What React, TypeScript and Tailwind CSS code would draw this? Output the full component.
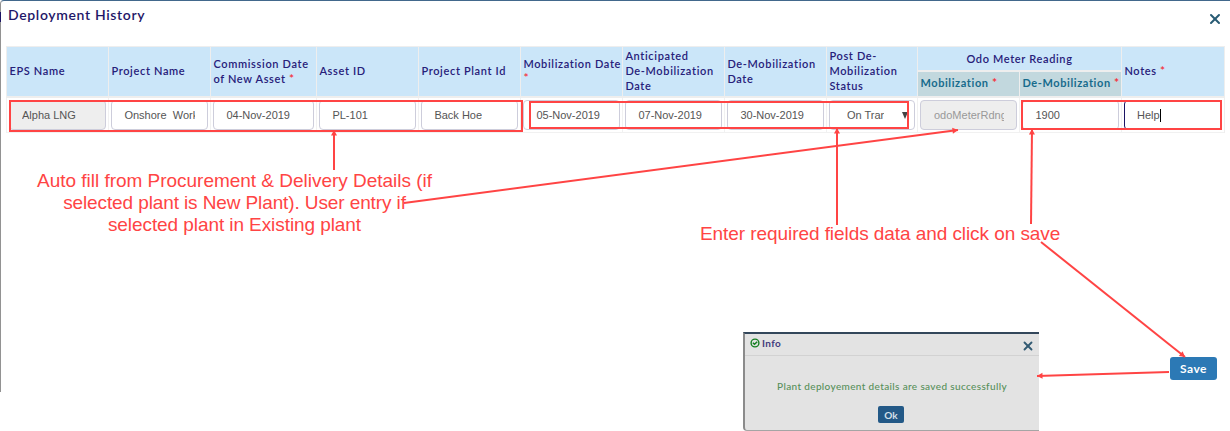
import { X } from "lucide-react";

type Column = { label: string[]; required?: "inline" | "below"; value: string; kind?: "disabled" | "placeholder" | "select" | "focus" };

const columns: Column[] = [
  { label: ["EPS Name"], value: "Alpha LNG", kind: "disabled" },
  { label: ["Project Name"], value: "Onshore  Work" },
  { label: ["Commission Date", "of New Asset"], required: "inline", value: "04-Nov-2019" },
  { label: ["Asset ID"], value: "PL-101" },
  { label: ["Project Plant Id"], value: "Back Hoe" },
  { label: ["Mobilization Date"], required: "below", value: "05-Nov-2019" },
  { label: ["Anticipated", "De-Mobilization", "Date"], value: "07-Nov-2019" },
  { label: ["De-Mobilization", "Date"], value: "30-Nov-2019" },
  { label: ["Post De-", "Mobilization", "Status"], value: "On Tran", kind: "select" },
  { label: ["Mobilization"], required: "inline", value: "odoMeterRdng", kind: "placeholder" },
  { label: ["De-Mobilization"], required: "inline", value: "1900" },
  { label: ["Notes"], required: "inline", value: "Help", kind: "focus" },
];

const gridColumns = "grid grid-cols-[102px_102px_106px_102px_102px_102px_102px_102px_91px_102px_102px_103px]";

function Star() {
  return <span className="text-[12px] leading-[10px] text-[#f5303a]">*</span>;
}

function Label({ column }: { column: Column }) {
  return (
    <div className="whitespace-nowrap">
      {column.label.map((line, i) => (
        <div key={line} className="h-[15px]">
          {line}
          {column.required === "inline" && i === column.label.length - 1 && <> <Star /></>}
        </div>
      ))}
      {column.required === "below" && <div className="h-[14px] leading-[14px]"><Star /></div>}
    </div>
  );
}

function HeaderCell({ column }: { column: Column }) {
  return (
    <div className="row-span-2 flex items-center border-l border-[#eeeeee] bg-[#cbe6f9] pb-[2px] pl-[2.4px]">
      <Label column={column} />
    </div>
  );
}

function Field({ column }: { column: Column }) {
  const look =
    column.kind === "disabled"
      ? "border-[#cdcddb] bg-[#eeeeee] text-[#555555] pl-[12px] pr-[12px]"
      : column.kind === "placeholder"
        ? "border-[#cdcddb] bg-[#eeeeee] text-[#999999] pl-[13px] pr-[12px]"
        : column.kind === "focus"
          ? "border-[#1b1464] bg-white text-[#555555] pl-[12px] pr-[12px]"
          : column.kind === "select"
            ? "border-[#cdcddb] bg-white text-[#555555] pl-[17px]"
            : "border-[#cdcddb] bg-white text-[#555555] pl-[12.4px] pr-[12px]";
  return (
    <div className="border-l border-b border-[#f1f1f1] pt-[2px] pr-[2px] pl-[2px]">
      <div className={`flex h-[30px] items-center rounded-[4px] border ${look}`}>
        <span className={`overflow-hidden whitespace-pre ${column.kind === "select" ? "w-[37px]" : ""}`}>{column.value}</span>
        {column.kind === "focus" && <span className="h-[13px] w-px shrink-0 bg-black" />}
        {column.kind === "select" && (
          <svg className="ml-[18px] h-[7px] w-[6px] shrink-0" viewBox="0 0 6 7">
            <path d="M0 0H6L3 7Z" fill="#444444" />
          </svg>
        )}
      </div>
    </div>
  );
}

function InfoDialog() {
  return (
    <div className="absolute top-[332px] left-[743px] flex h-[99px] w-[296px] flex-col rounded-bl-[4px] border-t-2 border-b border-l-2 border-t-[#33475b] border-b-[#a5a5a5] border-l-[#8b8b8b] bg-[#e3e3e3]">
      <div className="flex h-[22px] shrink-0 items-start justify-between border-b border-[#d2d2d2] pr-[4px] pl-[5px]">
        <div className="flex items-center pt-[2px]">
          <svg className="h-[10px] w-[10px]" viewBox="0 0 10 10" fill="none" stroke="#168022">
            <circle cx="5" cy="5" r="3.9" strokeWidth="1.4" />
            <path d="M2.9 4.8L4.5 6.3L7.2 3.7" strokeWidth="1.5" />
          </svg>
          <span className="ml-[2px] text-[10px] leading-[14px] font-bold tracking-[0.35px] text-[#413b7d]">Info</span>
        </div>
        <X className="mt-[5px] h-[14px] w-[14px] text-[#335b73]" strokeWidth={3.2} />
      </div>
      <div className="pt-[23px] text-center text-[10px] leading-[14px] font-medium tracking-[0.36px] whitespace-nowrap text-[#57905a]">
        Plant deployement details are saved successfully
      </div>
      <button className="mt-[13px] h-[17px] w-[26px] shrink-0 -translate-x-px self-center rounded-[2px] bg-[#235987] text-[10px] leading-[16px] font-bold text-[#d4e0e9]">Ok</button>
    </div>
  );
}

function Arrow({ x1, y1, x2, y2 }: { x1: number; y1: number; x2: number; y2: number }) {
  const angle = (Math.atan2(y2 - y1, x2 - x1) * 180) / Math.PI;
  return (
    <g>
      <line x1={x1} y1={y1} x2={x2} y2={y2} stroke="#ff4444" strokeWidth="2" />
      <path d="M0 0L-5.5 -3V3Z" fill="#ff4444" transform={`translate(${x2} ${y2}) rotate(${angle})`} />
    </g>
  );
}

export default function App() {
  return (
    <div className="relative h-[431px] w-[1230px] overflow-hidden bg-white font-['Lato',sans-serif]">
      <main className="h-[392px] rounded-tl-[4px] border-t border-l border-t-[#42688c] border-l-[#929292]">
        <header className="flex h-[45px] items-start justify-between pt-[4px] pr-[7px] pl-[7px]">
          <h1 className="text-[14px] leading-[20px] font-semibold tracking-[0.65px] text-[#1f1768]">Deployment History</h1>
          <X className="mt-[6px] h-[16px] w-[16px] text-[#285b74]" strokeWidth={3} />
        </header>
        <section className="ml-[5px] w-[1219px] border-t border-r border-[#eeeeee]">
          <div className={`${gridColumns} h-[51px] grid-rows-[23px_26px] border-b-2 border-[#eeeeee] text-[11px] leading-[15px] font-semibold tracking-[0.65px] text-[#272079]`}>
            {columns.slice(0, 9).map((column) => (
              <HeaderCell key={column.label.join(" ")} column={column} />
            ))}
            <div className="col-span-2 flex items-center justify-center border-l border-[#eeeeee] bg-[#cbe6f9] pb-px">Odo Meter Reading</div>
            <HeaderCell column={columns[11]} />
            {columns.slice(9, 11).map((column, i) => (
              <div key={column.label[0]} className={`${i === 0 ? "col-start-10" : "col-start-11"} flex items-center border-t-2 border-l border-[#eeeeee] bg-[#c2d8de] pb-[3px] pl-[2.4px] font-bold tracking-[0.6px] text-[#176b8c]`}>
                <Label column={column} />
              </div>
            ))}
          </div>
          <div className={`${gridColumns} h-[35px] font-['Liberation_Sans',sans-serif] text-[11px] leading-[15px]`}>
            {columns.map((column) => (
              <Field key={column.label.join(" ")} column={column} />
            ))}
          </div>
        </section>
        <div className="flex h-[258px] items-end justify-end pr-[13px] pb-[11px]">
          <button className="h-[23px] w-[47px] rounded-[3px] bg-[#2c79b5] text-[12px] font-bold tracking-[0.5px] text-white">Save</button>
        </div>
      </main>

      <span className="absolute top-[12px] left-0 h-[10px] w-px bg-[#1b1464]" />

      <InfoDialog />

      <svg className="pointer-events-none absolute inset-0 h-[431px] w-[1230px]" viewBox="0 0 1230 431" fill="none">
        <g stroke="#ff4444" strokeWidth="2">
          <rect x="10" y="101" width="512" height="30" />
          <rect x="530" y="102" width="378" height="26" />
          <rect x="1022" y="101" width="199" height="28" />
        </g>
        <Arrow x1={334} y1={170} x2={334} y2={130} />
        <Arrow x1={404} y1={203} x2={958} y2={130} />
        <Arrow x1={837} y1={225} x2={837} y2={128} />
        <Arrow x1={1031} y1={224} x2={1032} y2={129} />
        <Arrow x1={1041} y1={242} x2={1185} y2={357} />
        <Arrow x1={1169} y1={372} x2={1037} y2={376} />
      </svg>

      <div className="absolute top-[170px] left-[37px] text-center font-['Liberation_Sans',sans-serif] text-[19px] leading-[22px] whitespace-nowrap text-[#ff4444]">
        <p className="tracking-[-0.02px]">Auto fill from Procurement &amp; Delivery Details (if</p>
        <p className="tracking-[-0.11px]">selected plant is New Plant). User entry if</p>
        <p className="tracking-[-0.08px]">selected plant in Existing plant</p>
      </div>
      <div className="absolute top-[223px] left-[700px] font-['Liberation_Sans',sans-serif] text-[19px] leading-[22px] tracking-[-0.07px] whitespace-nowrap text-[#ff4444]">
        Enter required fields data and click on save
      </div>
    </div>
  );
}
